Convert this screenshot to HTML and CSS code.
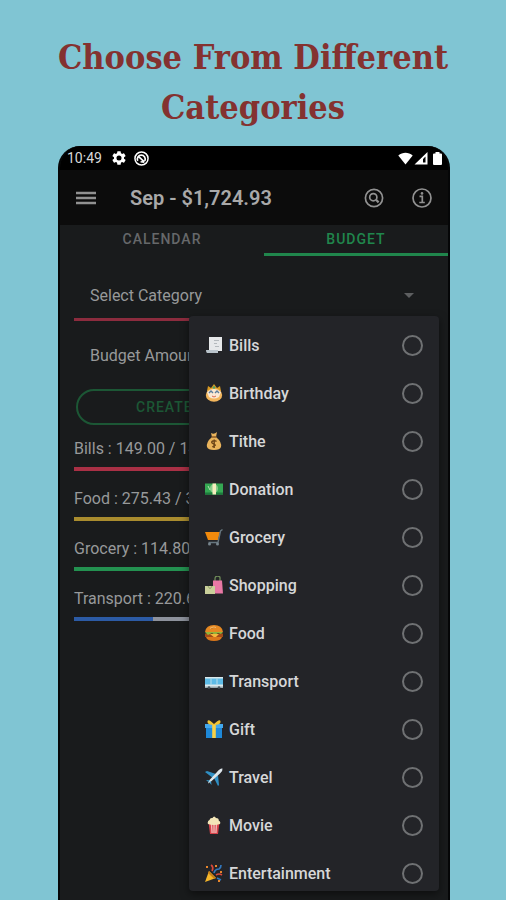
FILE: index.html
```html
<!DOCTYPE html>
<html lang="en">
<head>
  <meta charset="UTF-8" />
  <meta name="viewport" content="width=device-width, initial-scale=1.0"/>
  <title>Choose From Different Categories</title>
  <link rel="stylesheet" href="styles.css">
</head>
<body>
  <h1 class="headline">Choose From Different Categories</h1>

  <main class="phone">
    <div class="status-bar">
      <span class="clock">10:49</span>
      <svg class="status-gear" width="14" height="14" viewBox="2 2 20 20"><path fill="#fff" d="M19.14 12.94c.04-.3.06-.61.06-.94s-.02-.64-.07-.94l2.03-1.58a.5.5 0 0 0 .12-.61l-1.92-3.32a.5.5 0 0 0-.59-.22l-2.39.96a7 7 0 0 0-1.62-.94l-.36-2.54a.5.5 0 0 0-.48-.41h-3.84a.5.5 0 0 0-.47.41l-.36 2.54a7 7 0 0 0-1.62.94l-2.39-.96a.5.5 0 0 0-.59.22L2.74 8.87a.5.5 0 0 0 .12.61l2.03 1.58a6 6 0 0 0 0 1.88l-2.03 1.58a.5.5 0 0 0-.12.61l1.92 3.32c.12.22.37.29.59.22l2.39-.96c.5.38 1.03.7 1.62.94l.36 2.54c.05.24.24.41.48.41h3.84c.24 0 .44-.17.47-.41l.36-2.54a7 7 0 0 0 1.62-.94l2.39.96c.22.08.47 0 .59-.22l1.92-3.32a.5.5 0 0 0-.12-.61zM12 15.6a3.6 3.6 0 1 1 0-7.2 3.6 3.6 0 0 1 0 7.2z"/></svg>
      <svg width="15" height="15" viewBox="0 0 16 16" fill="none" stroke="#fff"><circle cx="8" cy="8" r="7" stroke-width="1.6"/><path stroke-width="1.8" d="M4 10.5a4.2 4.2 0 1 1 7.5 0M5 6l6 5.5M7 11.500l4 .5"/></svg>
      <svg class="status-wifi" width="15" height="13" viewBox="0 0 15 13"><path fill="#fff" d="M7.500 12.500.3 3.400C4.500-.3 10.500-.3 14.700 3.400z"/></svg>
      <svg width="14" height="13" viewBox="0 0 14 13"><path fill="#fff" fill-rule="evenodd" d="M13.500 0v12.500H.5zM11.500 4.500v6H9V7z"/></svg>
      <svg class="status-battery" width="9" height="13" viewBox="0 0 9 13"><path fill="#fff" d="M2.500 0h4v1.500H8q1 0 1 1V12q0 1-1 1H1q-1 0-1-1V2.500q0-1 1-1h1.500z"/></svg>
    </div>

    <header class="app-bar">
      <button class="icon-btn" type="button" aria-label="Menu">
        <svg width="20" height="14" viewBox="0 0 20 14" stroke="#919191" stroke-width="2.4"><path d="M0 2h20M0 7h20M0 12h20"/></svg>
      </button>
      <h2 class="title">Sep - $1,724.93</h2>
      <button class="icon-btn" type="button" aria-label="Search">
        <svg width="20" height="20" viewBox="0 0 20 20" fill="none" stroke="#919191" stroke-width="1.7"><circle cx="10" cy="10" r="8.600"/><circle cx="9.300" cy="9.200" r="3.600"/><path stroke-width="2.200" d="m12 11.800 2.600 2.600"/></svg>
      </button>
      <button class="icon-btn" type="button" aria-label="Info">
        <svg width="20" height="20" viewBox="0 0 20 20" fill="none" stroke="#919191" stroke-width="1.700"><circle cx="10" cy="10" r="9"/><path d="M7.500 8.300h2.800v6M7.300 14.500h5.500"/><circle cx="10" cy="5.400" r="1.300" fill="#919191" stroke="none"/></svg>
      </button>
    </header>

    <nav class="tabs">
      <button class="tab" type="button">CALENDAR</button>
      <button class="tab active" type="button">BUDGET</button>
    </nav>

    <form class="budget-form">
      <div class="select-wrap">
        <select class="field" name="category" aria-label="Category">
          <option>Select Category</option>
        </select>
        <svg class="arrow" width="10" height="5" viewBox="0 0 10 5"><path fill="#5d5f60" d="M0 0h10L5 5z"/></svg>
      </div>
      <input class="field amount" type="text" name="amount" placeholder="Budget Amount" aria-label="Budget Amount">
      <button class="create-btn" type="button">CREATE</button>
    </form>

    <section class="budgets">
      <div class="budget">
        <span>Bills : 149.00 / 149</span>
        <div class="bar"><div class="fill red" style="width: 100%"></div></div>
      </div>
      <div class="budget">
        <span>Food : 275.43 / 300</span>
        <div class="bar"><div class="fill yellow" style="width: 92%"></div></div>
      </div>
      <div class="budget">
        <span>Grocery : 114.80</span>
        <div class="bar"><div class="fill green" style="width: 38%"></div></div>
      </div>
      <div class="budget">
        <span>Transport : 220.65</span>
        <div class="bar"><div class="fill blue" style="width: 22%"></div></div>
      </div>
    </section>

    <div class="menu" role="radiogroup" aria-label="Category">
      <label class="option">
        <svg class="emoji" viewBox="0 0 18 18"><path fill="#e6e8ea" d="M4 1h13v14H4z"/><path fill="#b9c3cb" d="M1 14h12v3H2q-1 0-1-3z"/><path stroke="#b4b9bd" d="M9 4.500h5M9 7.500h3M10 10.500h4"/></svg>
        <span>Bills</span><input type="radio" name="cat">
      </label>
      <label class="option">
        <svg class="emoji" viewBox="0 0 18 18"><path fill="#d99a22" d="m2 7 1-5 3 2 3-4 3 4 3-2 1 5z"/><ellipse cx="9" cy="11" rx="8.200" ry="6.800" fill="#f3b65c"/><path fill="#fbe9d3" d="M2 8q7-6 14 0l-2 5q-5 3-10 0z"/><path fill="none" stroke="#5b7d9a" stroke-width="1.400" d="m4 9 2-2 2 2M10 9l2-2 2 2"/><circle cx="9" cy="3.500" r="1.300" fill="#48a26b"/><path fill="none" stroke="#d9694f" d="M7 12q2 2 4 0"/></svg>
        <span>Birthday</span><input type="radio" name="cat">
      </label>
      <label class="option">
        <svg class="emoji" viewBox="0 0 18 18"><path fill="#e9b35b" d="M6 1q3 2 6-1l-1 5q6 5 5 10-1 3-7 3t-7-3Q1 10 7 5z"/><path stroke="#8a5a24" stroke-width="1.400" d="M6.500 5h5"/><path fill="none" stroke="#6d4518" stroke-width="1.400" d="M11.500 9.500Q10 8 7.800 9t0 2.500 2.500 1.500-3 2M9.200 7.500v8.500"/></svg>
        <span>Tithe</span><input type="radio" name="cat">
      </label>
      <label class="option">
        <svg class="emoji" viewBox="0 0 18 18"><path fill="#35a853" d="M0 3.500h18v11H0z"/><path fill="#1c7c3c" d="M0 12.500h18v2H0z"/><ellipse cx="9" cy="8.500" rx="4" ry="4" fill="#8acb8c"/><path fill="#f4edbd" d="M7.500 3.500h3.500v11H7.500z"/><path stroke="#b7e3b4" d="m3 6 2 4"/></svg>
        <span>Donation</span><input type="radio" name="cat">
      </label>
      <label class="option">
        <svg class="emoji" viewBox="0 0 18 18"><path fill="#f28a0c" d="M0 4h15l-2 8H3z"/><path fill="none" stroke="#66757e" stroke-width="1.400" d="M17.500 1.500 15.500 3 13 14.500H3.500"/><circle cx="4.500" cy="16" r="1.500" fill="#78858d"/><circle cx="12.500" cy="16" r="1.500" fill="#78858d"/></svg>
        <span>Grocery</span><input type="radio" name="cat">
      </label>
      <label class="option">
        <svg class="emoji" viewBox="0 0 18 18"><path fill="none" stroke="#6e8a58" stroke-width="1.300" d="M10 6V3q0-3 2.700-3T15 3v3"/><path fill="#e878a5" d="M8 4.500h9l1 13H8z"/><path fill="#c9cf9a" d="M0 10h10v8H0z"/><path fill="none" stroke="#8f9f67" d="M3 10q2 5 4 0"/></svg>
        <span>Shopping</span><input type="radio" name="cat">
      </label>
      <label class="option">
        <svg class="emoji" viewBox="0 0 18 18"><path fill="#e58822" d="M0 8q1-7 9-7t9 7z"/><path fill="#a34a18" d="M0 9.500h18v3.500H0z"/><path fill="#8fb43c" d="M0 8h18l-2 2-3-1-3 2-3-2-4 2z"/><path fill="#f4b83c" d="m5 10 9 0-4 4z"/><path fill="#d9761b" d="M1 13h16q-1 4-8 4t-8-4z"/><path stroke="#f6b561" stroke-width="1.200" d="M5 4.500q3-2 6-1"/></svg>
        <span>Food</span><input type="radio" name="cat">
      </label>
      <label class="option">
        <svg class="emoji" viewBox="0 0 18 18"><path fill="#dce9ec" d="M0 5h18v11H0z"/><path fill="#5dbbe6" d="M0 6.500h18v6H0z"/><path stroke="#b9dce9" d="M6 6.500v6M12 6.500v6"/><path fill="#9aaab0" d="M0 14.500h18V16H0z"/><circle cx="4" cy="15.500" r="1.300" fill="#48565e"/><circle cx="14" cy="15.500" r="1.300" fill="#48565e"/></svg>
        <span>Transport</span><input type="radio" name="cat">
      </label>
      <label class="option">
        <svg class="emoji" viewBox="0 0 18 18"><path fill="#1e88d8" d="M1 5h16v13H1z"/><path fill="#43a8ee" d="M0 4h18v4H0z"/><path fill="#f7d046" d="M7.200 4h3.600v14H7.200z"/><path fill="#f0c233" d="M9 5Q2 5 2.500 1.500T9 4q6-6 6.500-2.500T9 5z"/></svg>
        <span>Gift</span><input type="radio" name="cat">
      </label>
      <label class="option">
        <svg class="emoji" viewBox="0 0 18 18"><path fill="#2f8fc4" d="m0 4 2-1 9 3-3 4zM14 17l-1 1-4-8 4-3z"/><path fill="#dce5ea" d="M17.500.5Q18 3 15 5.500L5.500 14 3 15.500 4 12.500 12 4q3-4 5.500-3.500z"/><path fill="#3b9dd0" d="m1 12 4 .5L3.500 14zM6.500 17 6 13l-1.500 1.500z"/></svg>
        <span>Travel</span><input type="radio" name="cat">
      </label>
      <label class="option">
        <svg class="emoji" viewBox="0 0 18 18"><path fill="#d8434b" d="M3.500 6h11l-1.500 12H5z"/><path stroke="#f0b7b3" stroke-width="1.400" d="m6.500 8 .6 9M9 8v9M11.500 8l-.6 9"/><path fill="#f3e6b8" d="M3 8Q2 5 4.500 4 5 1.500 7.500 2 9-1 11 2q3 0 2.700 2.500Q16 5.500 15 8q-6 2-12 0z"/></svg>
        <span>Movie</span><input type="radio" name="cat">
      </label>
      <label class="option">
        <svg class="emoji" viewBox="0 0 18 18"><path fill="#f5b52a" d="m4 7 7 7-11 4z"/><path fill="#c77e16" d="m4 7 7 7-2 .7L3 9z"/><path fill="none" stroke="#d8483c" stroke-width="1.700" d="M6 1q3 2 1 6M11 11q3-2 6 0"/><path fill="none" stroke="#3177bd" stroke-width="1.700" d="M9 9q1-4 5-4 2-1 2-4M12 14l4 2"/><path fill="#e8862c" d="M1 2h2v2H1zM10 1h2v2h-2zM15 7h2v2h-2zM13 16h2v2h-2z"/></svg>
        <span>Entertainment</span><input type="radio" name="cat">
      </label>
    </div>
  </main>
</body>
</html>
```
FILE: styles.css
```css
* {
  box-sizing: border-box;
}
body {
  margin: 0;
  height: 100vh;
  display: flex;
  flex-direction: column;
  background: #80c5d3;
  font-family: Roboto, sans-serif;
  overflow: hidden;
}
button, input, select {
  font-family: inherit;
}
.headline {
  margin: 0;
  padding: 32px 40px 14px;
  color: #843230;
  font-family: "DejaVu Serif Condensed", "DejaVu Serif", serif;
  font-size: 34px;
  line-height: 50px;
  text-align: center;
}
.phone {
  position: relative;
  flex: 1;
  margin: 0 56px 0 58px;
  background: #191b1c;
  border: solid #050607;
  border-width: 0 2px;
  border-radius: 22px 22px 0 0;
  overflow: hidden;
}

/* status bar */
.status-bar {
  display: flex;
  align-items: center;
  height: 24px;
  padding: 0 6px 0 7px;
  background: #000;
  color: #d8d8d8;
}
.clock {
  font-size: 14px;
  margin-right: 10px;
}
.status-gear {
  margin-right: 8px;
}
.status-wifi {
  margin-left: auto;
  margin-right: 1px;
}
.status-battery {
  margin-left: 5px;
}

/* app bar */
.app-bar {
  display: flex;
  align-items: center;
  height: 55px;
  padding: 0 16px;
  background: #0c0c0c;
}
.icon-btn {
  display: flex;
  padding: 0;
  border: 0;
  background: none;
  cursor: pointer;
}
.icon-btn + .icon-btn {
  margin-left: 28px;
}
.title {
  flex: 1;
  margin: 0 0 0 34px;
  color: #a9a9a9;
  font-size: 20px;
  font-weight: 600;
}
.tabs {
  display: grid;
  grid-template-columns: 204fr 184fr;
  height: 31px;
}
.tab {
  padding: 0;
  border: 0;
  border-bottom: 3px solid transparent;
  background: none;
  color: #66686a;
  font-size: 14px;
  font-weight: 500;
  letter-spacing: 1px;
}
.tab.active {
  color: #20864c;
  border-color: #20864c;
}

/* form */
.budget-form {
  display: flex;
  flex-direction: column;
  padding: 16px 14px 0;
}
.select-wrap {
  display: flex;
  align-items: center;
  height: 49px;
  padding-right: 20px;
  border-bottom: 3px solid #8c2c3e;
}
.field {
  flex: 1;
  appearance: none;
  padding: 0 16px;
  border: 0;
  background: none;
  color: #97999a;
  font-size: 16px;
}
.amount {
  flex: none;
  height: 48px;
  margin: 10px 0;
}
.amount::placeholder {
  color: #97999a;
}
.create-btn {
  height: 36px;
  margin: 0 2px;
  padding: 0 58px;
  border: 2px solid #1c5735;
  border-radius: 18px;
  background: none;
  color: #1c5735;
  font-size: 14px;
  font-weight: 500;
  letter-spacing: 1px;
  text-align: left;
}

.budgets {
  padding: 12px 14px;
}
.budget {
  height: 50px;
  color: #97999a;
  font-size: 16px;
  line-height: 24px;
}
.bar {
  height: 4px;
  margin-top: 6px;
  background: #8d929c;
}
.fill {
  height: 100%;
}
.red {
  background: #a93045;
}
.yellow {
  background: #a98c2e;
}
.green {
  background: #239150;
}
.blue {
  background: #2c5ba5;
}

/* category dropdown */
.menu {
  position: absolute;
  top: 170px;
  right: 9px;
  bottom: 9px;
  width: 250px;
  padding-top: 5px;
  border-radius: 4px;
  background: #232428;
  box-shadow: 0 3px 8px rgba(0,0,0,0.5);
  overflow: hidden;
}
.option {
  display: flex;
  align-items: center;
  height: 48px;
  padding: 0 16px;
  color: #d6d7d8;
  font-size: 16px;
  font-weight: 500;
}
.option span {
  flex: 1;
}
.emoji {
  width: 18px;
  height: 18px;
  margin-right: 6px;
}
.option input {
  appearance: none;
  width: 21px;
  height: 21px;
  margin: 0;
  border: 2px solid #6f7173;
  border-radius: 50%;
}
```
